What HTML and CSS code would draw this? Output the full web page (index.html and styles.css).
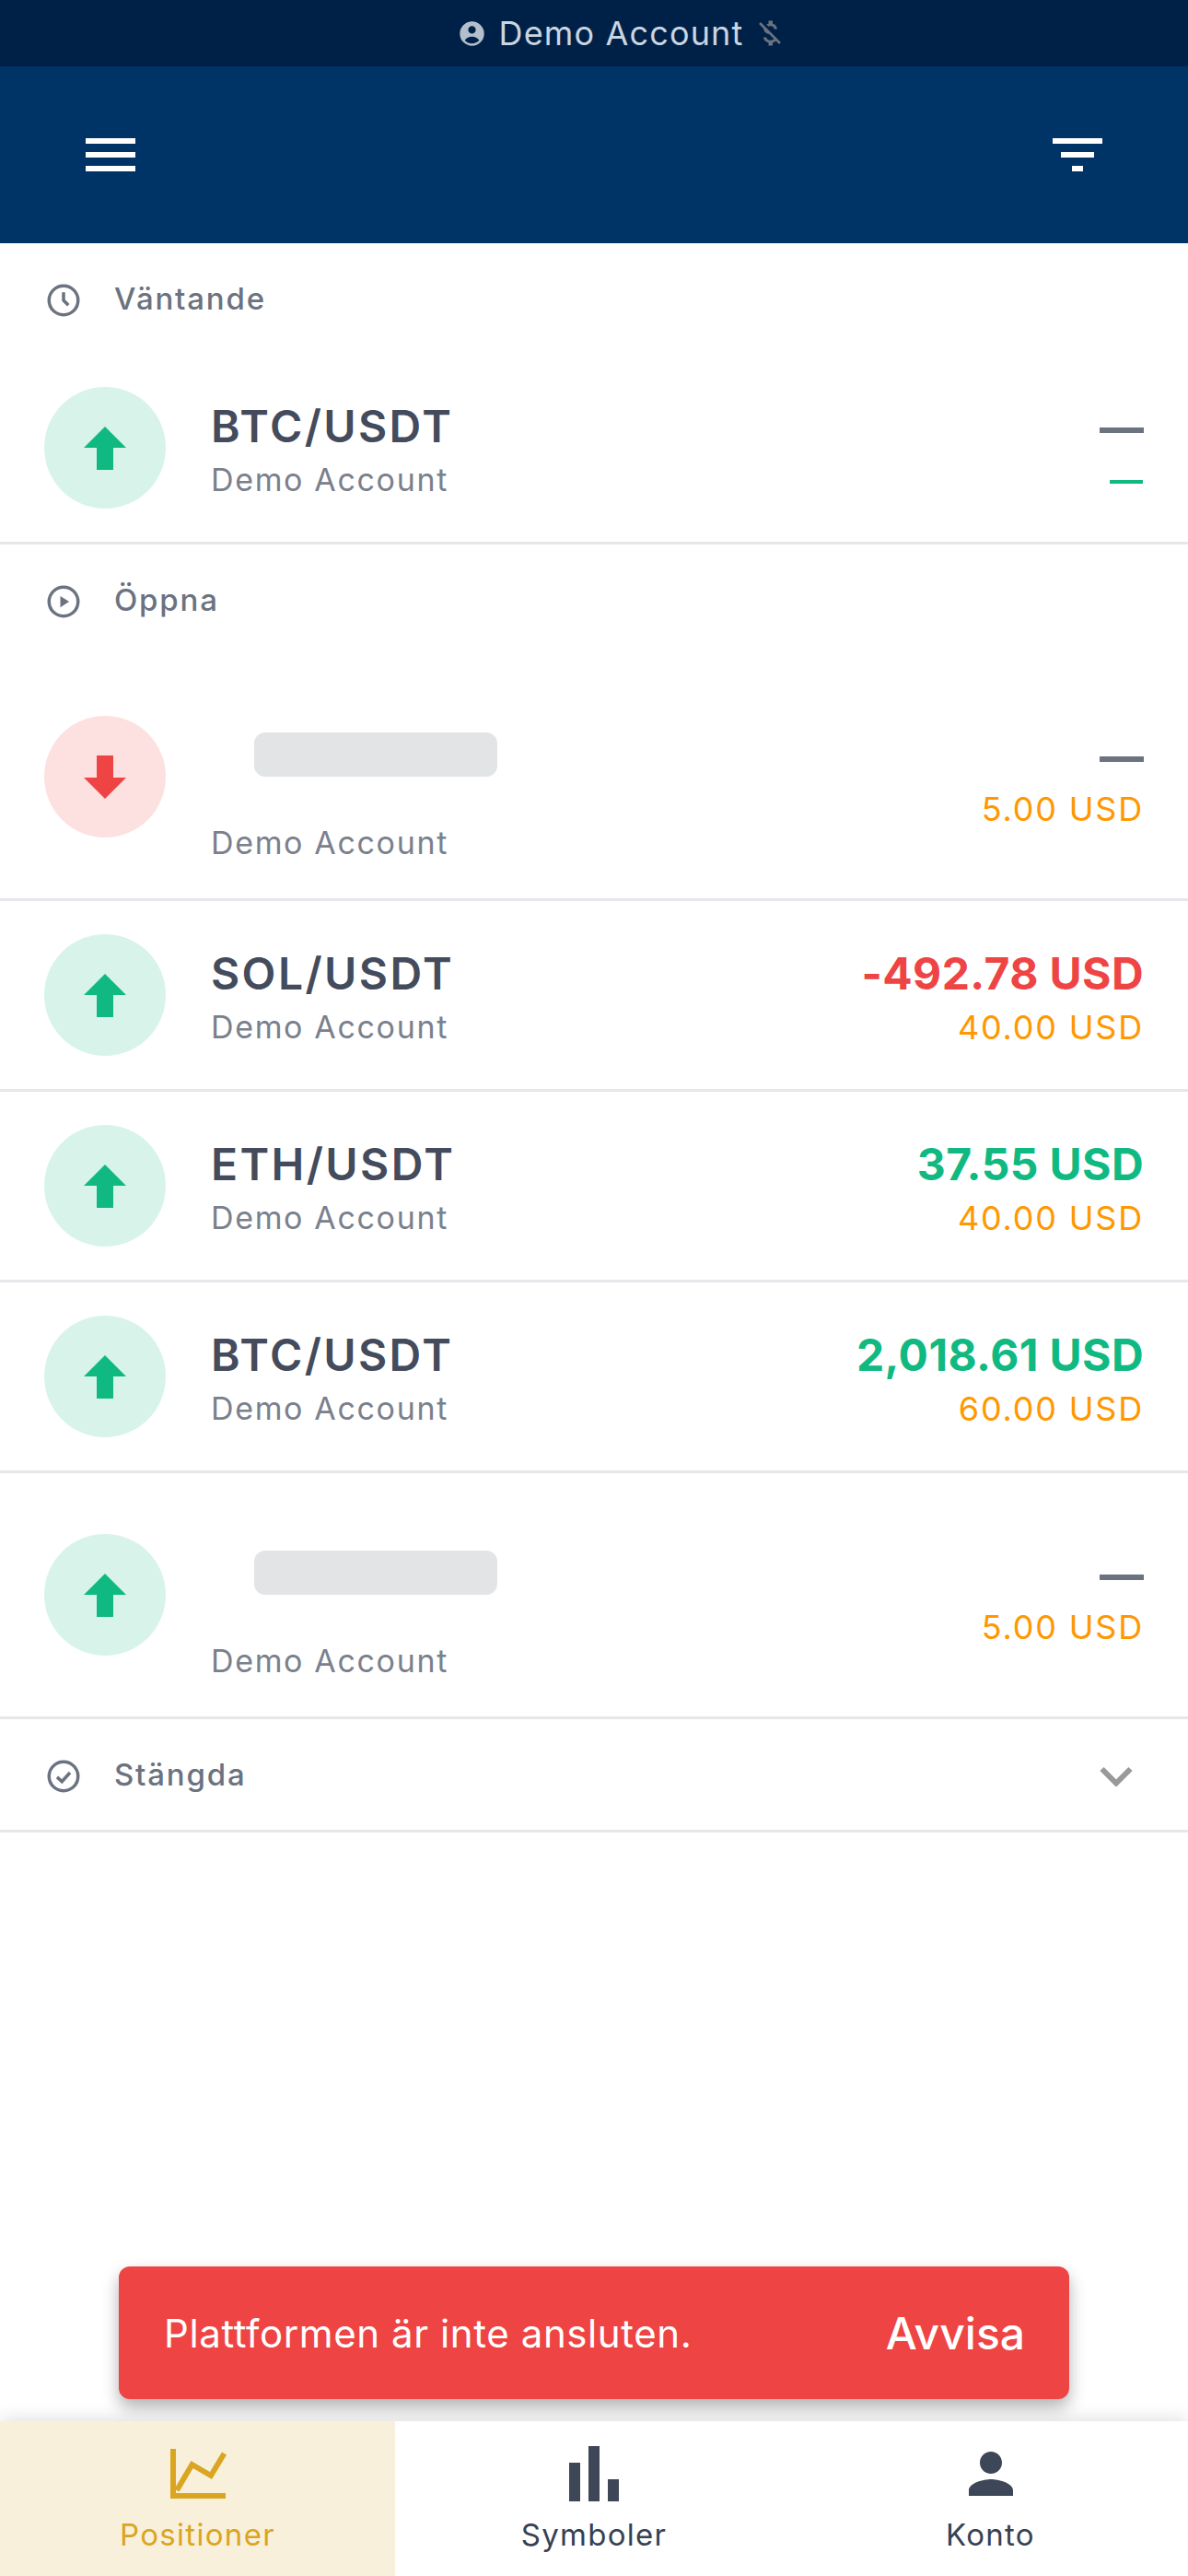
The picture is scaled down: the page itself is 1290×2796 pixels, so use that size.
FILE: index.html
```html
<!doctype html>
<html lang="en">

<head>
    <meta charset="utf-8" />
    <meta name="viewport" content="width=device-width, initial-scale=1.0" />
    <title>Positioner</title>
    <link rel="stylesheet" href="styles.css">
</head>

<body>
    <div class="app">
        <div class="status-bar">
            <svg class="status-user" viewBox="0 0 20 20"><path fill-rule="evenodd" d="M18 10a8 8 0 1 1-16 0 8 8 0 0 1 16 0zm-5.500-2.500a2.500 2.500 0 1 1-5 0 2.500 2.500 0 0 1 5 0zM10 12a5.990 5.990 0 0 0-4.790 2.390A6.480 6.480 0 0 0 10 16.500a6.480 6.480 0 0 0 4.790-2.110A5.990 5.990 0 0 0 10 12z"/></svg>
            <span>Demo Account</span>
            <svg class="status-off" viewBox="0 0 24 24"><path d="M12.500 6.900c1.780 0 2.440.85 2.500 2.100h2.210c-.07-1.720-1.120-3.300-3.210-3.810V3h-3v2.160c-.53.12-1.030.3-1.480.54l1.470 1.470c.41-.17.91-.27 1.510-.27zM5.330 4.060 4.060 5.330 7.500 8.770c0 2.080 1.560 3.210 3.910 3.910l3.510 3.510c-.34.48-1.050.91-2.420.91-2.060 0-2.870-.92-2.980-2.100h-2.200c.12 2.190 1.760 3.420 3.680 3.830V21h3v-2.150c.96-.18 1.820-.55 2.450-1.120l2.220 2.220 1.270-1.270L5.330 4.060z"/></svg>
        </div>

        <header class="top-bar">
            <div class="menu-btn"><i></i><i></i><i></i></div>
            <div class="filter-btn"><i></i><i></i><i></i></div>
        </header>

        <main class="list">
            <div class="section-head">
                <svg viewBox="0 0 24 24"><circle cx="12" cy="12" r="9"/><path d="M12 7v5l3 3"/></svg>
                <span>Väntande</span>
            </div>
            <div class="row">
                <div class="side side-up"><svg viewBox="0 0 46 47"><path d="M23 0 46 23H32V47H14V23H0Z"/></svg></div>
                <div class="info">
                    <div class="name">BTC/USDT</div>
                    <div class="account">Demo Account</div>
                </div>
                <div class="values">
                    <div class="dash"></div>
                    <div class="dash-small"></div>
                </div>
            </div>

            <div class="section-head">
                <svg viewBox="0 0 24 24"><circle cx="12" cy="12" r="9"/><path class="play" d="M10 8.500v7l5.500-3.500z"/></svg>
                <span>Öppna</span>
            </div>
            <div class="row row-loading">
                <div class="side side-down"><svg viewBox="0 0 46 47"><path d="M23 47 46 24H32V0H14V24H0Z"/></svg></div>
                <div class="info">
                    <div class="skeleton"></div>
                    <div class="account">Demo Account</div>
                </div>
                <div class="values">
                    <div class="dash"></div>
                    <div class="margin">5.00 USD</div>
                </div>
            </div>
            <div class="row">
                <div class="side side-up"><svg viewBox="0 0 46 47"><path d="M23 0 46 23H32V47H14V23H0Z"/></svg></div>
                <div class="info">
                    <div class="name">SOL/USDT</div>
                    <div class="account">Demo Account</div>
                </div>
                <div class="values">
                    <div class="pnl loss">-492.78 USD</div>
                    <div class="margin">40.00 USD</div>
                </div>
            </div>
            <div class="row">
                <div class="side side-up"><svg viewBox="0 0 46 47"><path d="M23 0 46 23H32V47H14V23H0Z"/></svg></div>
                <div class="info">
                    <div class="name">ETH/USDT</div>
                    <div class="account">Demo Account</div>
                </div>
                <div class="values">
                    <div class="pnl gain">37.55 USD</div>
                    <div class="margin">40.00 USD</div>
                </div>
            </div>
            <div class="row">
                <div class="side side-up"><svg viewBox="0 0 46 47"><path d="M23 0 46 23H32V47H14V23H0Z"/></svg></div>
                <div class="info">
                    <div class="name">BTC/USDT</div>
                    <div class="account">Demo Account</div>
                </div>
                <div class="values">
                    <div class="pnl gain">2,018.61 USD</div>
                    <div class="margin">60.00 USD</div>
                </div>
            </div>
            <div class="row row-loading">
                <div class="side side-up"><svg viewBox="0 0 46 47"><path d="M23 0 46 23H32V47H14V23H0Z"/></svg></div>
                <div class="info">
                    <div class="skeleton"></div>
                    <div class="account">Demo Account</div>
                </div>
                <div class="values">
                    <div class="dash"></div>
                    <div class="margin">5.00 USD</div>
                </div>
            </div>

            <div class="section-head section-closed">
                <svg viewBox="0 0 24 24"><circle cx="12" cy="12" r="9"/><path d="M8 12.500l3 2.800 5-5.600"/></svg>
                <span>Stängda</span>
                <svg class="chevron" viewBox="0 0 36 22"><path d="M2.500 3 18 18.500 33.500 3"/></svg>
            </div>
        </main>

        <div class="toast">
            <span class="toast-msg">Plattformen är inte ansluten.</span>
            <span class="toast-btn">Avvisa</span>
        </div>

        <nav class="tabs">
            <div class="tab tab-active">
                <svg viewBox="-6 -9 72 72"><path class="chart-line" d="M3 0V51H60M7 45 23.500 17 44 29 58.500 5"/></svg>
                <span>Positioner</span>
            </div>
            <div class="tab">
                <svg viewBox="-9 -6 72 72"><path d="M0 18H12V60H0ZM21 0H33V60H21ZM42 36H54V60H42Z"/></svg>
                <span>Symboler</span>
            </div>
            <div class="tab">
                <svg viewBox="0 0 24 24"><path d="M12 12c2.210 0 4-1.790 4-4s-1.790-4-4-4-4 1.790-4 4 1.790 4 4 4zm0 2c-2.670 0-8 1.340-8 4v2h16v-2c0-2.660-5.330-4-8-4z"/></svg>
                <span>Konto</span>
            </div>
        </nav>
    </div>
</body>

</html>
```
FILE: styles.css
```css
* {
    box-sizing: border-box;
}

html,
body {
    margin: 0;
    padding: 0;
    background: #fff;
}

.app {
    position: relative;
    display: flex;
    flex-direction: column;
    width: 1290px;
    height: 2796px;
    overflow: hidden;
    font-family: Inter, "Liberation Sans", sans-serif;
}

/* Top bars */
.status-bar {
    display: flex;
    align-items: center;
    justify-content: center;
    height: 72px;
    padding-left: 60px;
    background: #002147;
    color: #cbd5e1;
    font-size: 36px;
    letter-spacing: 1.15px;
}

.status-user {
    width: 33px;
    height: 33px;
    margin-right: 13px;
    fill: #b4bfcc;
}

.status-off {
    width: 36px;
    height: 36px;
    margin-left: 11px;
    fill: #6b7280;
}

.top-bar {
    display: flex;
    align-items: center;
    justify-content: space-between;
    height: 192px;
    padding: 0 93px;
    background: #003366;
}

.menu-btn,
.filter-btn {
    display: flex;
    flex-direction: column;
    align-items: center;
    gap: 9px;
    width: 54px;
}

.menu-btn i,
.filter-btn i {
    display: block;
    width: 54px;
    height: 6px;
    background: #fff;
}

.filter-btn i:nth-child(2) {
    width: 36px;
}

.filter-btn i:nth-child(3) {
    width: 12px;
}

/* Sections */
.section-head {
    display: flex;
    align-items: center;
    height: 120px;
    padding: 4px 0 0 48px;
    color: #6b7280;
    font-size: 33px;
    font-weight: 500;
    letter-spacing: 1.8px;
}

.section-head span {
    margin-bottom: 4px;
}

.section-head svg {
    width: 42px;
    height: 42px;
    margin-right: 34px;
    fill: none;
    stroke: #6b7280;
    stroke-width: 2;
}

.section-head .play {
    fill: #6b7280;
    stroke: none;
}

.section-closed {
    height: 123px;
    border-bottom: 3px solid #e5e7eb;
}

.section-head .chevron {
    width: 36px;
    height: 22px;
    margin: 0 60px 0 auto;
    stroke: #999;
    stroke-width: 6;
}

/* Position rows */
.row {
    display: flex;
    align-items: center;
    height: 207px;
    padding: 0 48px;
    border-bottom: 3px solid #e5e7eb;
}

.row-loading {
    height: 267px;
}

.side {
    display: flex;
    align-items: center;
    justify-content: center;
    flex-shrink: 0;
    width: 132px;
    height: 132px;
    border-radius: 50%;
}

.side svg {
    width: 46px;
    height: 47px;
}

.side-up {
    background: #d8f4ea;
    fill: #10b981;
}

.side-down {
    background: #fde1e1;
    fill: #ef4444;
}

.info {
    flex: 1;
    padding-top: 8px;
    margin-left: 49px;
}

.row-loading .info {
    padding-top: 50px;
}

.name {
    padding-top: 1px;
    margin-bottom: 1px;
    color: #434b5c;
    font-size: 48px;
    font-weight: 600;
    line-height: 60px;
    letter-spacing: 2.4px;
}

.account {
    color: #7a808c;
    font-size: 34px;
    line-height: 54px;
    letter-spacing: 1.65px;
}

.skeleton {
    width: 264px;
    height: 48px;
    margin: 0 0 45px 47px;
    border-radius: 12px;
    background: #e3e4e6;
}

.values {
    display: flex;
    flex-direction: column;
    align-items: flex-end;
    padding-top: 8px;
}

.pnl {
    padding-top: 1px;
    margin-bottom: 1px;
    font-size: 48px;
    font-weight: 700;
    line-height: 60px;
    letter-spacing: 0.4px;
}

.loss {
    color: #ef4444;
}

.gain {
    color: #10b981;
}

.margin {
    color: #ff9800;
    font-size: 36px;
    line-height: 54px;
    letter-spacing: 1.8px;
}

.dash {
    width: 48px;
    height: 6px;
    margin: 32px 0 24px;
    background: #6b7280;
}

.dash-small {
    width: 36px;
    height: 4px;
    margin: 27px 1px 23px 0;
    background: #10b981;
}

/* Toast */
.toast {
    position: absolute;
    left: 129px;
    top: 2460px;
    display: flex;
    align-items: center;
    justify-content: space-between;
    width: 1032px;
    height: 144px;
    padding: 0 48px 0 49px;
    border-radius: 12px;
    background: #ef4444;
    color: #fff;
    box-shadow: 0 9px 18px rgba(0, 0, 0, 0.3);
}

.toast-msg {
    font-size: 42px;
    letter-spacing: 0.6px;
}

.toast-btn {
    font-size: 48px;
    font-weight: 500;
}

/* Bottom nav */
.tabs {
    position: absolute;
    left: 0;
    bottom: 0;
    display: grid;
    grid-template-columns: 429px 432px 429px;
    width: 100%;
    height: 168px;
    background: #fff;
    box-shadow: 0 -3px 18px rgba(0, 0, 0, 0.12);
}

.tab {
    display: flex;
    flex-direction: column;
    align-items: center;
    color: #374151;
    font-size: 33px;
    letter-spacing: 1.3px;
    fill: #3d4757;
}

.tab svg {
    width: 72px;
    height: 72px;
    margin-top: 21px;
}

.tab span {
    margin-top: 10px;
}

.tab-active {
    background: #f9f0dc;
    color: #daa520;
}

.chart-line {
    fill: none;
    stroke: #daa520;
    stroke-width: 6;
}
```
